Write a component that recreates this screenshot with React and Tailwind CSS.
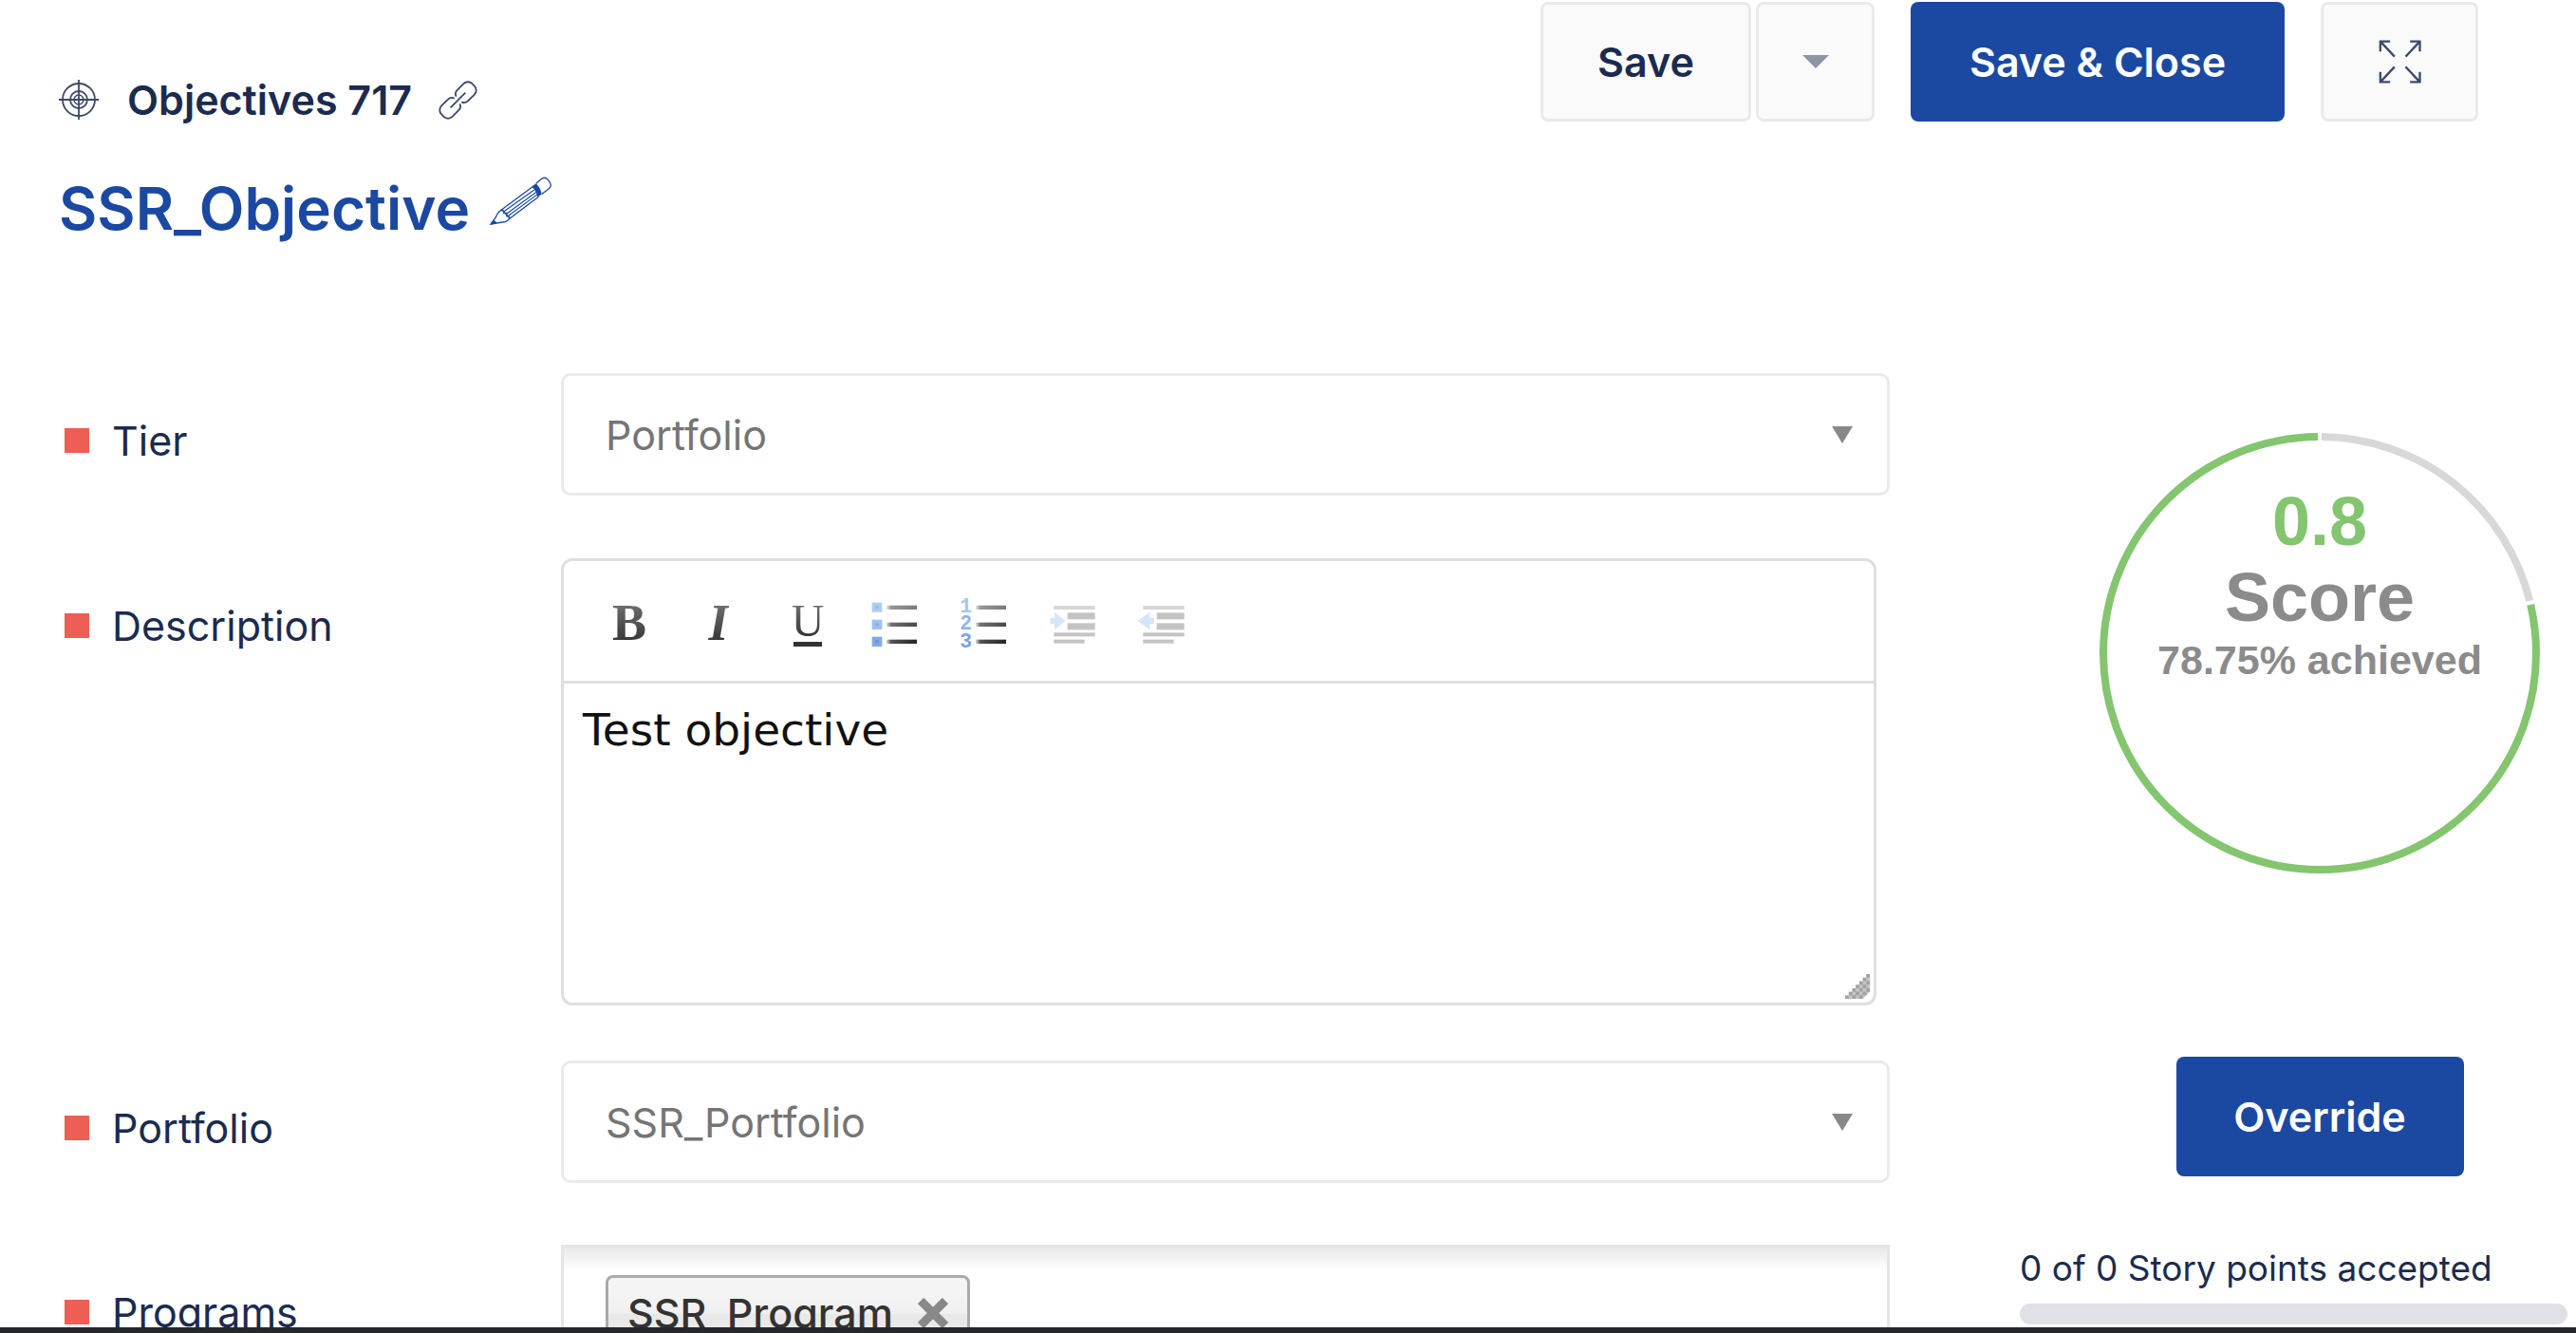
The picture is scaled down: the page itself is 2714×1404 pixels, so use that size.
// src/pages/ObjectiveDetail.jsx
import React, { useState } from "react";

/** ----------------------------------------
 * Icons
 -----------------------------------------*/
const TargetIcon = () => (
  <svg viewBox="0 0 42 42" className="w-[42px] h-[42px]" fill="none" stroke="#3c4a69" strokeWidth="1.8">
    <circle cx="21" cy="21" r="17" />
    <circle cx="21" cy="21" r="9" />
    <circle cx="21" cy="21" r="5" strokeWidth="1.4" />
    <path d="M21 0V42M0 21H42" />
  </svg>
);

const LinkIcon = () => (
  <svg viewBox="36 46 122 122" className="w-[41px] h-[41px]" fill="none" stroke="#3c4a69" strokeWidth="5.5">
    <g transform="translate(97 107) rotate(-45)">
      <path d="M4-12Q8-24 21-24H49A19 19 0 0 1 68-5V5A19 19 0 0 1 49 24H21Q8 24 4 12" />
      <path d="M-4-12Q-8-24-21-24H-49A19 19 0 0 0-68-5V5A19 19 0 0 0-49 24H-21Q-8 24-4 12" />
      <path d="M-33 0H33" />
    </g>
  </svg>
);

const PencilIcon = () => (
  <svg viewBox="210 342 200 160" className="w-[67px] h-[53px]" fill="none" stroke="#1b49a2" strokeWidth="4">
    <path d="M347 378L247 452Q238 458 230 476L215 496L252 490Q266 490 274 479L367 409" />
    <path d="M353 387L256 457M359 395L262 466M363 402L268 472" strokeWidth="3.5" />
    <path d="M247 452Q256 450 257 460Q267 460 266 470Q275 470 274 479" strokeWidth="5" />
    <path d="M213 498L222 484Q231 484 234 494Z" fill="#1b49a2" stroke="none" />
    <path d="M345 377L359 367Q374 382 377 401L364 411Q360 390 345 377Z" fill="#1b49a2" stroke="none" />
    <path d="M359 367L378 351Q386 346 394 352Q403 360 406 371Q407 377 401 383L377 401" />
  </svg>
);

const ExpandIcon = () => (
  <svg viewBox="196 119 134 138" className="w-[45px] h-[46px]" fill="none" stroke="#3c4a69" strokeWidth="7">
    <path d="M232 124H201V156M201 124L246 172" />
    <path d="M295 124H326V156M326 124L281 172" />
    <path d="M232 252H201V220M201 252L246 204" />
    <path d="M295 252H326V220M326 252L281 204" />
  </svg>
);

const Caret = ({ className }) => (
  <svg viewBox="0 0 22 18" className={className} fill="currentColor" preserveAspectRatio="none">
    <path d="M0 0H22L11 18Z" />
  </svg>
);

const LineGradient = ({ id }) => (
  <linearGradient id={id} x1="0" x2="1" y1="0" y2="0">
    <stop offset="0" stopColor="#000" stopOpacity="0.15" />
    <stop offset="0.15" stopColor="#000" stopOpacity="0.75" />
    <stop offset="1" stopColor="#000" stopOpacity="0.95" />
  </linearGradient>
);

const BulletListIcon = () => (
  <svg viewBox="48 51 174 174" className="w-[58px] h-[58px]">
    <defs><LineGradient id="bullet-line" /></defs>
    <g strokeWidth="10">
      <rect x="61" y="79" width="22" height="20" fill="#9dbdea" stroke="#b1cdf2" />
      <rect x="61" y="133" width="22" height="21" fill="#8db2e6" stroke="#a0c0ee" />
      <rect x="61" y="187" width="22" height="21" fill="#6f98d8" stroke="#83a9e2" />
    </g>
    <g fill="url(#bullet-line)">
      <rect x="102" y="83" width="96" height="13" opacity="0.55" />
      <rect x="102" y="137" width="96" height="13" opacity="0.75" />
      <rect x="102" y="191" width="96" height="13" opacity="0.9" />
    </g>
  </svg>
);

const NumberListIcon = () => (
  <svg viewBox="329 51 174 174" className="w-[58px] h-[58px] overflow-visible">
    <defs><LineGradient id="number-line" /></defs>
    <g fontFamily="Liberation Mono, monospace" fontWeight="700" fontSize="64">
      <text x="333" y="105" fill="#a6c6f0">1</text>
      <text x="333" y="160" fill="#8fb5e9">2</text>
      <text x="333" y="215" fill="#7ba4e0">3</text>
    </g>
    <g fill="url(#number-line)">
      <rect x="383" y="83" width="96" height="13" opacity="0.55" />
      <rect x="383" y="137" width="96" height="13" opacity="0.75" />
      <rect x="383" y="191" width="96" height="13" opacity="0.9" />
    </g>
  </svg>
);

const IndentIcon = ({ out }) => (
  <svg viewBox="6 51 174 174" className="w-[58px] h-[58px]">
    <path
      d={out ? "M8 132L46 104V122H60V142H46V160Z" : "M61 132L27 104V122H13V142H27V160Z"}
      fill="#d6e5f8"
    />
    <g fill="#c4c4c4">
      <rect x="25" y="84" width="130" height="12" fill="#d6d6d6" />
      <rect x="68" y="106" width="87" height="21" />
      <rect x="68" y="139" width="87" height="21" />
      <rect x="25" y="169" width="130" height="12" />
      <rect x="25" y="191" width="97" height="12" />
    </g>
  </svg>
);

const GripIcon = () => {
  const dots = [];
  for (let r = 0; r < 7; r++) {
    for (let c = 6 - r; c < 7; c++) {
      if ((r + c) % 2 === 0 && r + c < 12) dots.push([c, r]);
    }
  }
  return (
    <svg viewBox="0 0 28 28" className="w-[26px] h-[26px]">
      <path d="M0 28L28 0V20L20 28Z" fill="#c4c4c4" />
      {dots.map(([c, r]) => (
        <rect key={`${c}-${r}`} x={c * 4} y={r * 4} width="4" height="4" fill="#a2a2a2" />
      ))}
    </svg>
  );
};

/** ----------------------------------------
 * Form pieces
 -----------------------------------------*/
const Row = ({ id, label, className = "", children }) => (
  <div className={`flex items-start ${className}`}>
    <label htmlFor={id} className="flex items-center w-[523px] shrink-0 mt-[45px] leading-[52px]">
      <span className="w-[26px] h-[26px] mr-6 bg-[#ed5e54]" />
      {label}
    </label>
    {children}
  </div>
);

const SelectBox = ({ id, options }) => (
  <div className="relative flex-1">
    <select
      id={id}
      className="block w-full h-[129px] pl-11 pr-20 pt-0.5 appearance-none bg-white border-3 border-[#eaeaea] rounded-[10px] text-[#757575]"
    >
      {options.map((o) => (
        <option key={o}>{o}</option>
      ))}
    </select>
    <Caret className="absolute right-[39px] top-14 w-[22px] h-[18px] text-[#888] pointer-events-none" />
  </div>
);

const ScoreRing = ({ score, achieved }) => {
  const rest = 100 - achieved;
  const gap = 0.28;
  return (
    <div className="relative w-[464px] h-[464px] pt-[53px] text-center font-bold font-['Liberation_Sans',Arial,sans-serif] text-[#8b8b8b]">
      <svg viewBox="0 0 464 464" className="absolute inset-0 w-full h-full" fill="none" strokeWidth="8">
        <g transform="rotate(-90 232 232)">
          <circle
            cx="232" cy="232" r="228" pathLength="100" stroke="#d8d8d8"
            strokeDasharray={`${rest - gap} 100`} strokeDashoffset={-gap / 2}
          />
          <circle
            cx="232" cy="232" r="228" pathLength="100" stroke="#84c570"
            strokeDasharray={`${achieved - gap} 100`} strokeDashoffset={-(rest + gap / 2)}
          />
        </g>
      </svg>
      <div className="text-[72px] leading-[80px] text-[#84c570]">{score}</div>
      <div className="text-[72px] leading-[80px]">Score</div>
      <div className="text-[43px] leading-[52px]">{achieved}% achieved</div>
    </div>
  );
};

export default function App() {
  const [description, setDescription] = useState("Test objective");
  const [programs, setPrograms] = useState(["SSR_Program"]);

  const grayButton = "flex items-center justify-center h-[126px] bg-[#fafafa] border-3 border-[#eaeaea] rounded-lg";
  const blueButton = "h-[126px] bg-[#1b49a2] text-white font-semibold rounded-lg";
  const toolButton = "flex items-center justify-center w-[58px] h-[58px]";
  const inkText = "bg-linear-to-b from-[#7a7a7a] to-[#2e2e2e] bg-clip-text text-transparent";

  return (
    <div className="flex flex-col h-screen overflow-hidden bg-white font-['Inter',sans-serif] text-[43px] text-[#1b2b4f]">
      <main className="flex-1 overflow-hidden">
        {/* Header */}
        <header className="flex items-start justify-between pl-[62px] pr-[103px] pt-0.5">
          <div className="pt-[77px]">
            <div className="flex items-center leading-[52px] font-semibold">
              <TargetIcon />
              <span className="ml-[30px] mr-7">Objectives 717</span>
              <a href="#link" aria-label="Copy link"><LinkIcon /></a>
            </div>
            <div className="flex items-start mt-[50px]">
              <h1 className="text-[62px] leading-[78px] font-semibold text-[#1b49a2]">SSR_Objective</h1>
              <button aria-label="Edit name" className="ml-5 mt-1"><PencilIcon /></button>
            </div>
          </div>

          <div className="flex">
            <button className={`${grayButton} w-[222px] font-semibold`}>Save</button>
            <button aria-label="More save options" className={`${grayButton} w-[125px] ml-[5px]`}>
              <Caret className="w-[28px] h-[14px] text-[#8d95a7]" />
            </button>
            <button className={`${blueButton} w-[394px] ml-[38px]`}>Save &amp; Close</button>
            <button aria-label="Full screen" className={`${grayButton} w-[166px] ml-[38px]`}>
              <ExpandIcon />
            </button>
          </div>
        </header>

        <div className="flex items-start mt-[134px] pl-[68px] pr-[9px]">
          {/* Form */}
          <form className="flex-1">
            <Row id="tier" label="Tier">
              <SelectBox id="tier" options={["Portfolio", "Program"]} />
            </Row>

            <Row id="description" label="Description" className="mt-[66px]">
              <div className="relative flex-1 mr-3.5 h-[471px] border-3 border-[#dfdfdf] rounded-xl">
                <div className="flex items-center gap-9 h-[129px] pl-10 pt-1 border-b-3 border-[#dfdfdf] font-['Liberation_Serif',serif]">
                  <button type="button" aria-label="Bold" className={toolButton}>
                    <span className={`text-[54px] leading-none font-bold ${inkText}`}>B</span>
                  </button>
                  <button type="button" aria-label="Italic" className={toolButton}>
                    <span className={`text-[54px] leading-none font-bold italic ${inkText}`}>I</span>
                  </button>
                  <button type="button" aria-label="Underline" className={`${toolButton} flex-col`}>
                    <span className={`text-[48px] leading-[44px] ${inkText}`}>U</span>
                    <span className="w-[30px] h-[5px] bg-[#333]" />
                  </button>
                  <button type="button" aria-label="Bulleted list" className={toolButton}><BulletListIcon /></button>
                  <button type="button" aria-label="Numbered list" className={toolButton}><NumberListIcon /></button>
                  <button type="button" aria-label="Indent" className={toolButton}><IndentIcon /></button>
                  <button type="button" aria-label="Outdent" className={toolButton}><IndentIcon out /></button>
                </div>
                <textarea
                  id="description"
                  value={description}
                  onChange={(e) => setDescription(e.target.value)}
                  className="block w-full h-[336px] px-5 pt-5 resize-none outline-none font-['DejaVu_Sans',sans-serif] text-[47px] leading-[58px] text-[#111]"
                />
                <span className="absolute right-1 bottom-1 pointer-events-none"><GripIcon /></span>
              </div>
            </Row>

            <Row id="portfolio" label="Portfolio" className="mt-[58px]">
              <SelectBox id="portfolio" options={["SSR_Portfolio"]} />
            </Row>

            <Row id="programs" label="Programs" className="mt-[65px]">
              <div className="flex flex-1 items-start min-h-[140px] px-11 pt-[29px] border-3 border-[#e5e5e5] bg-[linear-gradient(#e8e8e8,#fff_24px)]">
                {programs.map((p) => (
                  <span
                    key={p}
                    className="flex items-center h-20 px-5 border-3 border-[#aaa] rounded-lg bg-[linear-gradient(#f4f4f4_20%,#f0f0f0_50%,#e8e8e8_52%,#eee)] font-medium text-[#333]"
                  >
                    {p}
                    <button
                      type="button"
                      aria-label={`Remove ${p}`}
                      onClick={() => setPrograms(programs.filter((x) => x !== p))}
                      className="ml-[26px]"
                    >
                      <svg viewBox="0 0 32 32" className="w-8 h-8" stroke="#888" strokeWidth="9">
                        <path d="M3 3L29 29M29 3L3 29" />
                      </svg>
                    </button>
                  </span>
                ))}
                <input id="programs" className="flex-1 min-w-0 h-20 outline-none" />
              </div>
            </Row>
          </form>

          {/* Score panel */}
          <aside className="w-[577px] ml-[137px] shrink-0 pt-[63px]">
            <div className="flex flex-col items-center pl-[55px]">
              <ScoreRing score={0.8} achieved={78.75} />
              <button className={`${blueButton} w-[303px] mt-[193px]`}>Override</button>
            </div>
            <p className="mt-[75px] text-[37px] leading-[44px] whitespace-nowrap">0 of 0 Story points accepted</p>
            <div className="h-[22px] mt-[15px] rounded-full bg-[#e0e1e6]" />
          </aside>
        </div>
      </main>
      <footer className="h-1.5 shrink-0 bg-[#24272c]" />
    </div>
  );
}
